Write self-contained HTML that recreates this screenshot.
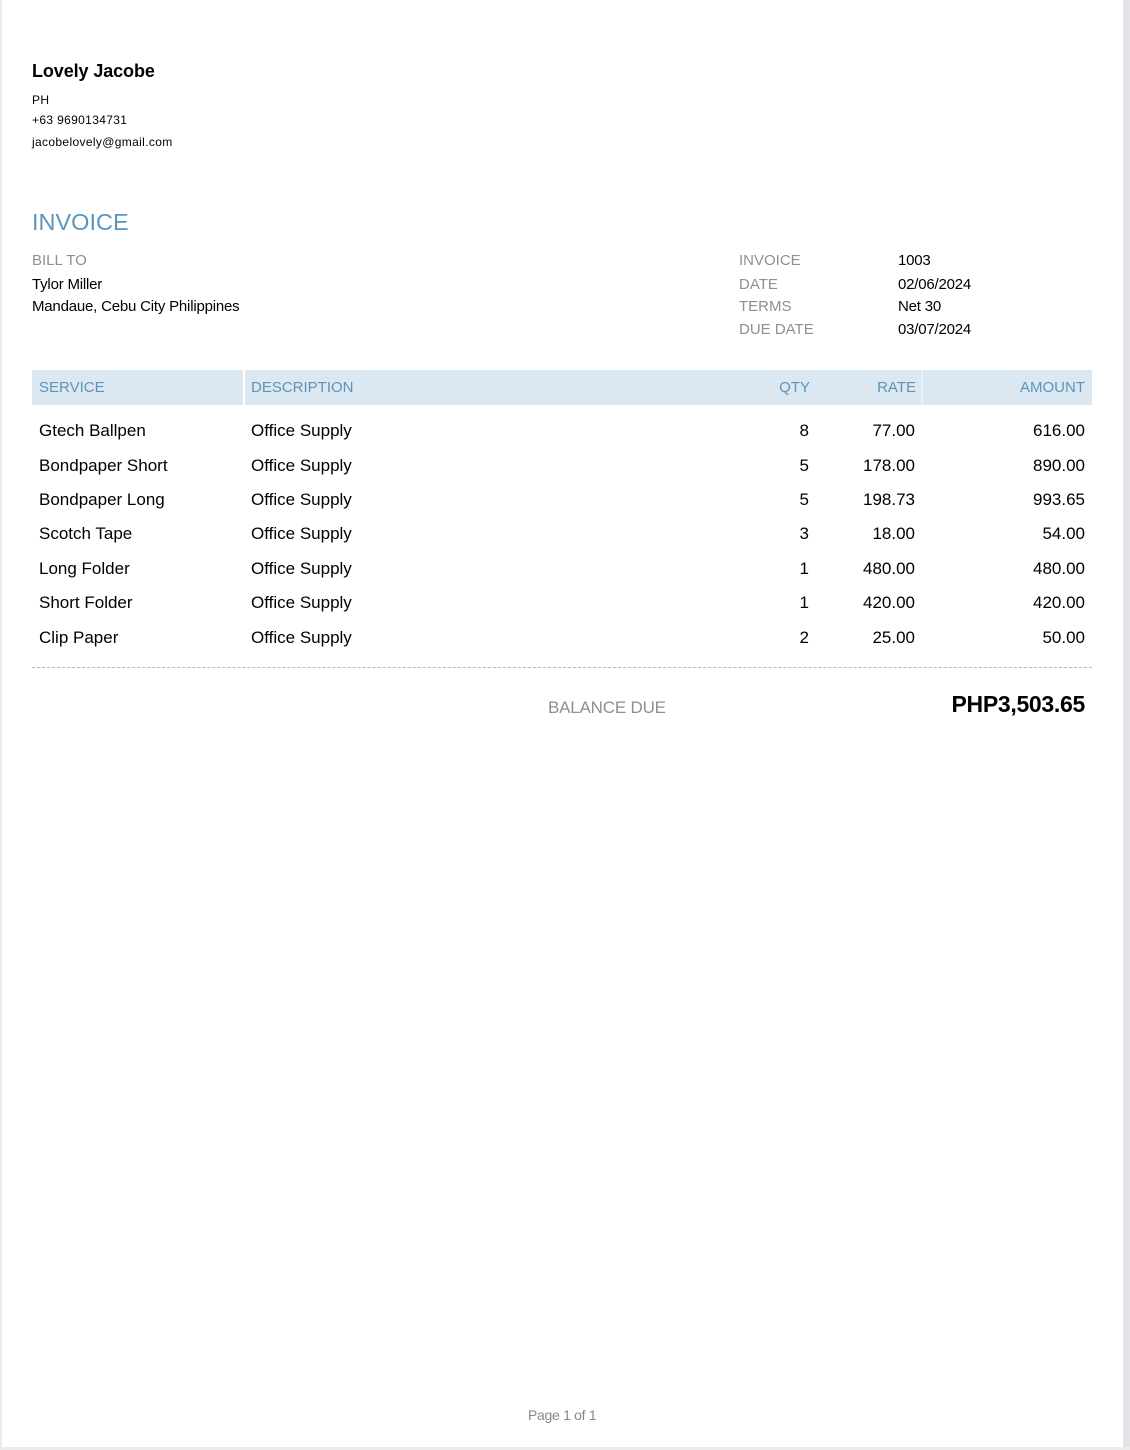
<!DOCTYPE html>
<html><head><meta charset="utf-8"><style>
*{margin:0;padding:0;box-sizing:border-box}
body{width:1130px;height:1450px;background:#fff;font-family:"Liberation Sans",sans-serif;color:#000;position:relative;overflow:hidden}
.t{position:absolute;white-space:nowrap;line-height:20px}
.r{text-align:right}
.g{color:#8f8f8f}
.b{color:#5b95bd}
.s{letter-spacing:0.35px}
</style></head><body>
<div style="position:absolute;left:0;top:0;width:2px;height:1450px;background:#ececec"></div>
<div style="position:absolute;left:1123px;top:0;width:7px;height:1450px;background:#e3e3e8"></div>
<div style="position:absolute;left:0;top:1447px;width:1130px;height:3px;background:#ececec"></div>

<div class="t" style="left:32px;top:61px;font-size:18px;font-weight:bold;letter-spacing:-0.1px">Lovely Jacobe</div>
<div class="t s" style="left:32px;top:90px;font-size:12px">PH</div>
<div class="t s" style="left:32px;top:110px;font-size:12px">+63 9690134731</div>
<div class="t s" style="left:32px;top:132px;font-size:12px">jacobelovely@gmail.com</div>

<div class="t b" style="left:32px;top:208px;font-size:23.5px;line-height:28px">INVOICE</div>

<div class="t g" style="left:32px;top:251px;font-size:15px">BILL TO</div>
<div class="t" style="left:32px;top:275px;font-size:15px;letter-spacing:-0.2px">Tylor Miller</div>
<div class="t" style="left:32px;top:297px;font-size:15px;letter-spacing:-0.2px">Mandaue, Cebu City Philippines</div>

<div class="t g" style="left:739px;top:251px;font-size:15px">INVOICE</div>
<div class="t g" style="left:739px;top:275px;font-size:15px">DATE</div>
<div class="t g" style="left:739px;top:297px;font-size:15px">TERMS</div>
<div class="t g" style="left:739px;top:320px;font-size:15px">DUE DATE</div>
<div class="t" style="left:898px;top:251px;font-size:15px;letter-spacing:-0.2px">1003</div>
<div class="t" style="left:898px;top:275px;font-size:15px;letter-spacing:-0.2px">02/06/2024</div>
<div class="t" style="left:898px;top:297px;font-size:15px;letter-spacing:-0.2px">Net 30</div>
<div class="t" style="left:898px;top:320px;font-size:15px;letter-spacing:-0.2px">03/07/2024</div>

<div style="position:absolute;left:32px;top:370px;width:1060px;height:35px;background:#dbe7f1"></div>
<div style="position:absolute;left:243px;top:370px;width:2px;height:35px;background:#fff"></div>
<div style="position:absolute;left:921px;top:370px;width:2px;height:35px;background:#e9f0f6"></div>
<div class="t b" style="left:39px;top:378px;font-size:15px">SERVICE</div>
<div class="t b" style="left:251px;top:378px;font-size:15px">DESCRIPTION</div>
<div class="t b r" style="left:700px;width:110px;top:378px;font-size:15px">QTY</div>
<div class="t b r" style="left:800px;width:116px;top:378px;font-size:15px">RATE</div>
<div class="t b r" style="left:950px;width:135px;top:378px;font-size:15px">AMOUNT</div>

<div class="t" style="left:39px;top:421px;font-size:17px">Gtech Ballpen</div><div class="t" style="left:251px;top:421px;font-size:17px">Office Supply</div><div class="t r" style="left:700px;width:109px;top:421px;font-size:17px">8</div><div class="t r" style="left:800px;width:115px;top:421px;font-size:17px">77.00</div><div class="t r" style="left:950px;width:135px;top:421px;font-size:17px">616.00</div>
<div class="t" style="left:39px;top:456px;font-size:17px">Bondpaper Short</div><div class="t" style="left:251px;top:456px;font-size:17px">Office Supply</div><div class="t r" style="left:700px;width:109px;top:456px;font-size:17px">5</div><div class="t r" style="left:800px;width:115px;top:456px;font-size:17px">178.00</div><div class="t r" style="left:950px;width:135px;top:456px;font-size:17px">890.00</div>
<div class="t" style="left:39px;top:490px;font-size:17px">Bondpaper Long</div><div class="t" style="left:251px;top:490px;font-size:17px">Office Supply</div><div class="t r" style="left:700px;width:109px;top:490px;font-size:17px">5</div><div class="t r" style="left:800px;width:115px;top:490px;font-size:17px">198.73</div><div class="t r" style="left:950px;width:135px;top:490px;font-size:17px">993.65</div>
<div class="t" style="left:39px;top:524px;font-size:17px">Scotch Tape</div><div class="t" style="left:251px;top:524px;font-size:17px">Office Supply</div><div class="t r" style="left:700px;width:109px;top:524px;font-size:17px">3</div><div class="t r" style="left:800px;width:115px;top:524px;font-size:17px">18.00</div><div class="t r" style="left:950px;width:135px;top:524px;font-size:17px">54.00</div>
<div class="t" style="left:39px;top:559px;font-size:17px">Long Folder</div><div class="t" style="left:251px;top:559px;font-size:17px">Office Supply</div><div class="t r" style="left:700px;width:109px;top:559px;font-size:17px">1</div><div class="t r" style="left:800px;width:115px;top:559px;font-size:17px">480.00</div><div class="t r" style="left:950px;width:135px;top:559px;font-size:17px">480.00</div>
<div class="t" style="left:39px;top:593px;font-size:17px">Short Folder</div><div class="t" style="left:251px;top:593px;font-size:17px">Office Supply</div><div class="t r" style="left:700px;width:109px;top:593px;font-size:17px">1</div><div class="t r" style="left:800px;width:115px;top:593px;font-size:17px">420.00</div><div class="t r" style="left:950px;width:135px;top:593px;font-size:17px">420.00</div>
<div class="t" style="left:39px;top:628px;font-size:17px">Clip Paper</div><div class="t" style="left:251px;top:628px;font-size:17px">Office Supply</div><div class="t r" style="left:700px;width:109px;top:628px;font-size:17px">2</div><div class="t r" style="left:800px;width:115px;top:628px;font-size:17px">25.00</div><div class="t r" style="left:950px;width:135px;top:628px;font-size:17px">50.00</div>

<div style="position:absolute;left:32px;top:667px;width:1060px;border-top:1px dashed #b8b8b8"></div>
<div class="t g" style="left:548px;top:698px;font-size:17px;letter-spacing:-0.2px">BALANCE DUE</div>
<div class="t r" style="left:850px;width:235px;top:690px;font-size:23px;line-height:28px;font-weight:bold;letter-spacing:-0.3px">PHP3,503.65</div>

<div class="t" style="left:528px;top:1405px;font-size:14px;color:#888;letter-spacing:-0.3px">Page 1 of 1</div>
</body></html>
